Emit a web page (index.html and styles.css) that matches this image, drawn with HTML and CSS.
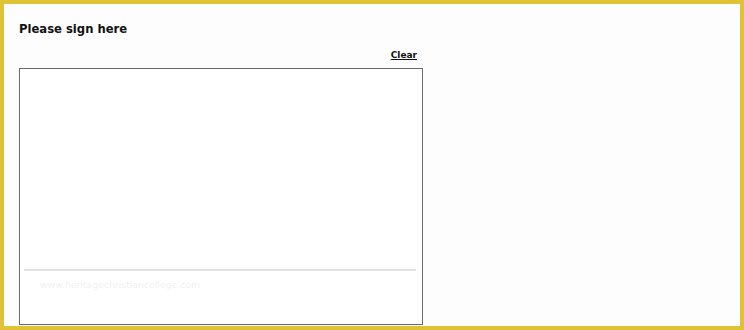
FILE: index.html
```html
<!DOCTYPE html>
<html lang="en">
<head>
    <meta charset="UTF-8">
    <meta name="viewport" content="width=device-width, initial-scale=1.0">
    <title>Signature</title>
    <link rel="stylesheet" href="styles.css">
</head>
<body>
    <div class="signature-block">
        <h1 class="signature-title">Please sign here</h1>
        <div class="signature-tools">
            <a href="#" class="btn-clear">Clear</a>
        </div>
        <!-- Zone de signature -->
        <div class="signature-pad">
            <div class="signature-line"></div>
            <div class="signature-mark">www.heritagechristiancollege.com</div>
        </div>
    </div>
</body>
</html>
```

FILE: styles.css
```css
/* Styles généraux */
html, body {
    height: 100%;
}
body {
    margin: 0;
    box-sizing: border-box;
    border: 4px solid #e0c236;
    background-color: #fdfdfd;
    font-family: "DejaVu Sans", Verdana, sans-serif;
    color: #111;
    overflow: hidden;
}

.signature-block {
    width: 404px;
    padding: 18px 0 0 15px;
}

.signature-title {
    margin: 0;
    font-size: 11.6px;
    font-weight: bold;
    line-height: 15px;
}

.signature-tools {
    margin-top: 10px;
    text-align: right;
    padding-right: 6px;
    line-height: 12px;
}
.btn-clear {
    font-size: 9px;
    font-weight: bold;
    color: #111;
    text-decoration: underline;
}

/* Zone de signature */
.signature-pad {
    margin-top: 7px;
    height: 255px;
    border: 1px solid #6a6a6a;
    background-color: #fff;
    padding: 0 6px 0 4px;
}
.signature-line {
    margin-top: 200px;
    height: 2px;
    background-color: #e2e2e2;
}
.signature-mark {
    margin-top: 8px;
    padding-left: 16px;
    font-size: 9.3px;
    color: #f2f2f2;
}
```
